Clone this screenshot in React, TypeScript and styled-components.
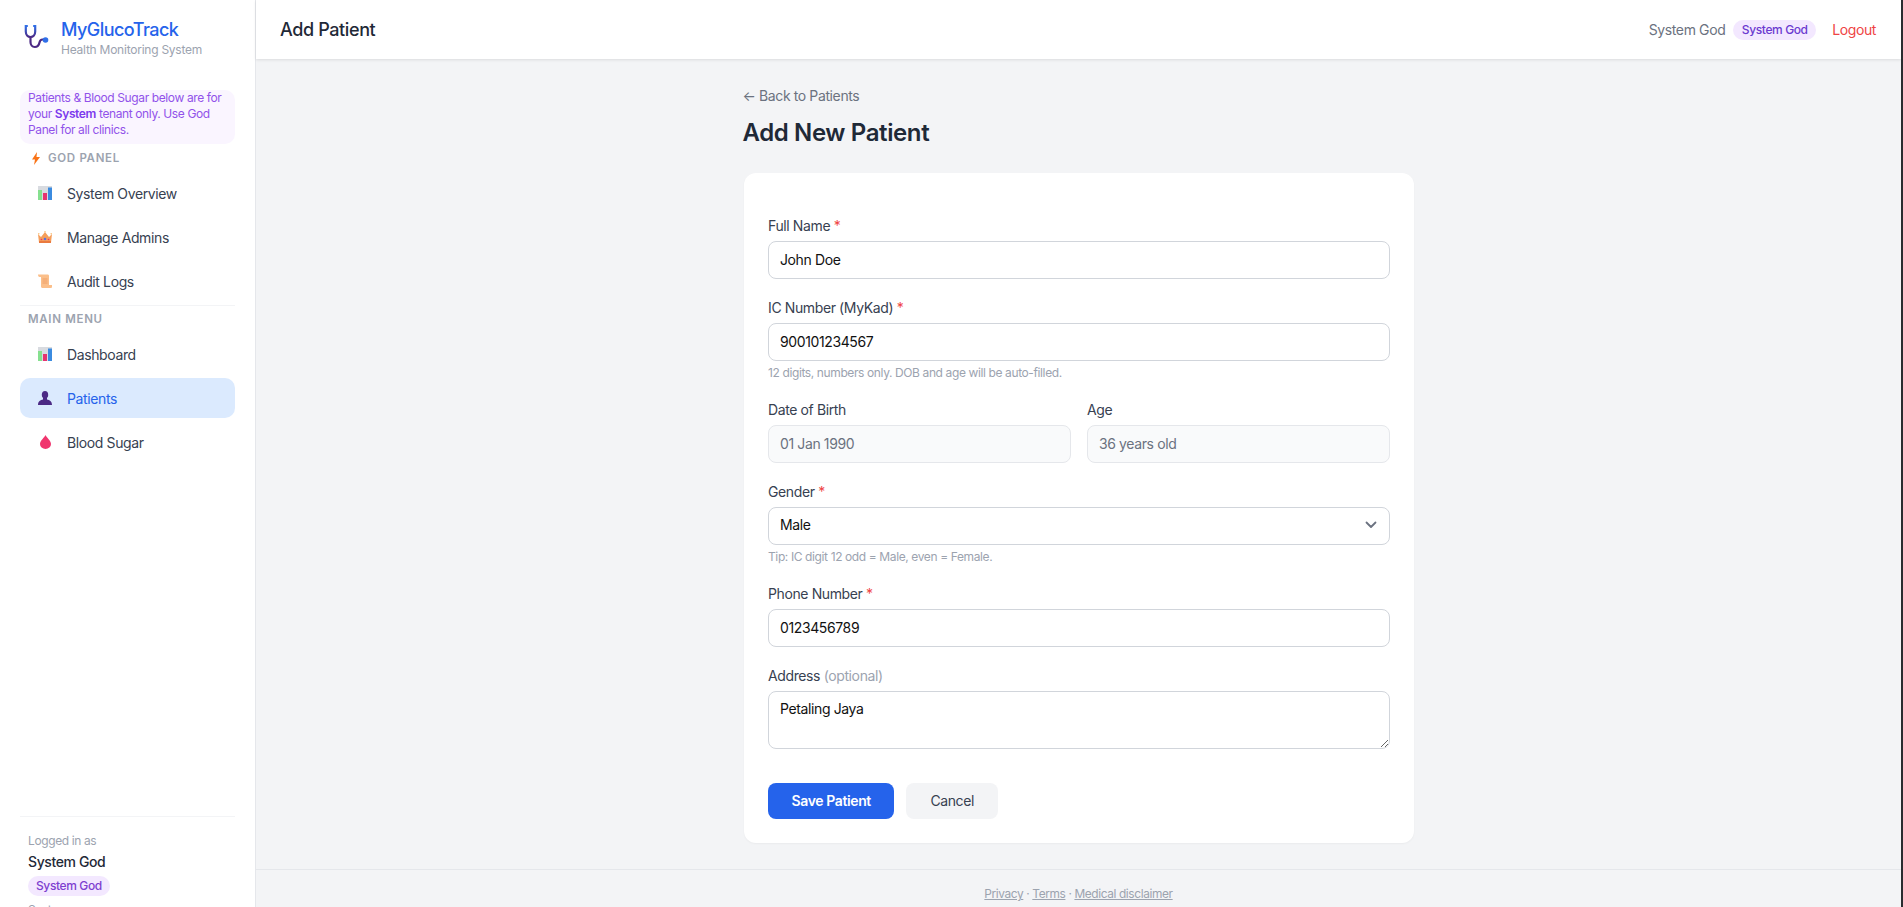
import styled, { createGlobalStyle } from 'styled-components';
import { ReactNode } from 'react';

const GlobalStyle = createGlobalStyle`
  * { box-sizing: border-box; }
  html, body { margin: 0; height: 100%; overflow: hidden; }
  body {
    font-family: Inter, "Open Sans", sans-serif;
    letter-spacing: -0.024em;
    background: #f3f4f6;
    color: #1f2937;
  }
  #root { height: 100%; }
`;

const Layout = styled.div`
  display: flex;
  height: 907px;
  overflow: hidden;
`;

const Sidebar = styled.aside`
  width: 256px;
  flex-shrink: 0;
  height: 907px;
  background: #fff;
  border-right: 1px solid #e5e7eb;
  padding: 0 20px;
  display: flex;
  flex-direction: column;
  overflow: hidden;
`;

const Brand = styled.div`
  display: flex;
  align-items: flex-start;
  gap: 12px;
  padding: 19px 0 0 4px;
  height: 90px;
`;

const BrandLogo = styled.span`
  display: inline-flex;
  margin-top: 5px;
`;

const BrandTitle = styled.div`
  font-size: 18px;
  line-height: 22px;
  font-weight: 500;
  letter-spacing: -0.03em;
  color: #2563eb;
`;

const BrandSub = styled.div`
  font-size: 12px;
  line-height: 16px;
  margin-top: 1px;
  letter-spacing: -0.02em;
  color: #9ca3af;
`;

const Notice = styled.div`
  background: #faf5ff;
  border-radius: 10px;
  padding: 0 8px;
  font-size: 12px;
  line-height: 16px;
  height: 54px;
  color: #9152ea;
  b { font-weight: 600; color: #7c3aed; }
`;

const SectionLabel = styled.div<{ $top: number }>`
  display: flex;
  align-items: center;
  gap: 8px;
  margin-top: ${p => p.$top}px;
  padding-left: 8px;
  height: 16px;
  font-size: 11.5px;
  font-weight: 600;
  letter-spacing: 0.06em;
  color: #9ca3af;
  text-transform: uppercase;
`;

const BoltSlot = styled.span`
  display: inline-flex;
  margin-left: 4px;
`;

const NavList = styled.nav`
  display: flex;
  flex-direction: column;
  gap: 4px;
  margin-top: 7px;
`;

const NavItem = styled.a<{ $active?: boolean }>`
  display: flex;
  align-items: center;
  gap: 15px;
  height: 40px;
  padding-left: 18px;
  border-radius: 10px;
  font-size: 14px;
  color: ${p => (p.$active ? '#2563eb' : '#374151')};
  background: ${p => (p.$active ? '#dbeafe' : 'transparent')};
`;

const NavDivider = styled.div`
  height: 1px;
  background: #f3f4f6;
  margin-top: 4px;
  flex-shrink: 0;
`;

const UserBox = styled.div`
  margin-top: auto;
  border-top: 1px solid #f3f4f6;
  padding: 16px 8px 0;
  height: 91px;
  flex-shrink: 0;
  display: flex;
  flex-direction: column;
  align-items: flex-start;
`;

const UserHint = styled.div`
  font-size: 12px;
  line-height: 16px;
  flex-shrink: 0;
  color: #9ca3af;
`;

const UserName = styled.div`
  font-size: 14px;
  line-height: 20px;
  margin-top: 3px;
  font-weight: 500;
  flex-shrink: 0;
  color: #1f2937;
`;

const Badge = styled.span`
  display: inline-block;
  background: #f3e8ff;
  color: #6b3ad0;
  border-radius: 999px;
  font-size: 12px;
  line-height: 20px;
  padding: 0 8.5px;
  font-weight: 500;
  flex-shrink: 0;
`;

const SideBadge = styled(Badge)`
  margin: 4px 0 6px;
  padding: 0 8px;
  color: #7e3fd0;
`;

const Main = styled.div`
  flex: 1;
  min-width: 0;
  display: flex;
  flex-direction: column;
  background: #f3f4f6;
`;

const ScrollEdge = styled.div`
  width: 2px;
  flex-shrink: 0;
  background: #2a2c30;
`;

const TopBar = styled.header`
  height: 59px;
  flex-shrink: 0;
  background: #fff;
  box-shadow: 0 1px 3px rgba(0, 0, 0, 0.1);
  display: flex;
  align-items: center;
  justify-content: space-between;
  padding: 0 25px 0 24px;
`;

const TopTitle = styled.div`
  font-size: 18px;
  font-weight: 500;
  color: #1f2937;
`;

const TopRight = styled.div`
  display: flex;
  align-items: center;
  gap: 8px;
  font-size: 14px;
  color: #6b7280;
`;

const Logout = styled.a`
  margin-left: 8px;
  color: #ef4444;
`;

const Content = styled.main`
  width: 670px;
  margin: 0 auto;
  padding-top: 28px;
  flex: 1;
`;

const BackLink = styled.a`
  display: block;
  margin-left: -1px;
  font-size: 14px;
  line-height: 18px;
  color: #6b7280;
`;

const Heading = styled.h1`
  margin: 12px 0 0 -1px;
  font-size: 24px;
  line-height: 32px;
  font-weight: 600;
  color: #1f2937;
`;

const Card = styled.form`
  margin-top: 24px;
  background: #fff;
  border-radius: 12px;
  box-shadow: 0 1px 2px rgba(0, 0, 0, 0.04);
  padding: 44px 23.5px 24px 24.5px;
  height: 670px;
`;

const Field = styled.div`
  margin-bottom: 20px;
`;

const Label = styled.label`
  display: block;
  font-size: 14px;
  line-height: 18px;
  margin-bottom: 6px;
  font-weight: 420;
  color: #374151;
  i { font-style: normal; color: #ef4444; }
  em { font-style: normal; font-weight: 400; color: #9ca3af; }
`;

const Input = styled.input`
  display: block;
  width: 100%;
  height: 38px;
  border: 1px solid #d1d5db;
  border-radius: 8px;
  padding: 0 11px 2px;
  font: inherit;
  letter-spacing: inherit;
  font-size: 14px;
  color: #111;
  background: #fff;
  outline: none;
  &:read-only { background: #f9fafb; border-color: #e5e7eb; color: #6b7280; }
`;

const SelectBox = styled.div`
  display: flex;
  align-items: center;
  justify-content: space-between;
  height: 38px;
  border: 1px solid #d1d5db;
  border-radius: 8px;
  padding: 0 8px 3px 11px;
  font-size: 14px;
  color: #111;
  background: #fff;
`;

const TextArea = styled.textarea`
  display: block;
  width: 100%;
  height: 58px;
  border: 1px solid #d1d5db;
  border-radius: 8px;
  padding: 8px 11px;
  font: inherit;
  letter-spacing: inherit;
  font-size: 14px;
  color: #111;
  outline: none;
`;

const Hint = styled.div`
  font-size: 12px;
  line-height: 16px;
  margin-top: 4px;
  color: #9ca3af;
`;

const TwoCols = styled.div`
  display: grid;
  grid-template-columns: 1fr 1fr;
  gap: 16px;
`;

const Actions = styled.div`
  display: flex;
  gap: 12px;
  margin-top: 34px;
`;

const Button = styled.button<{ $primary?: boolean }>`
  height: 36px;
  border: 0;
  border-radius: 8px;
  font: inherit;
  letter-spacing: inherit;
  font-size: 14px;
  font-weight: ${p => (p.$primary ? 600 : 400)};
  padding: 0 ${p => (p.$primary ? 23.5 : 24)}px 1px;
  color: ${p => (p.$primary ? '#fff' : '#374151')};
  background: ${p => (p.$primary ? '#2563eb' : '#f3f4f6')};
`;

const Footer = styled.footer`
  height: 38px;
  flex-shrink: 0;
  border-top: 1px solid #e5e7eb;
  display: flex;
  justify-content: center;
  align-items: center;
  padding-top: 10px;
  font-size: 11.9px;
  color: #9ca3af;
  a { text-decoration: underline; }
`;

function Stethoscope() {
  return (
    <svg width="25" height="25" viewBox="0 0 25 25" fill="none">
      <defs>
        <linearGradient id="steth" x1="0" y1="0" x2="0" y2="1">
          <stop offset="0" stopColor="#2f6fe8" />
          <stop offset="1" stopColor="#4c2a85" />
        </linearGradient>
      </defs>
      <path d="M3 2H1.800V7.500C1.800 10.800 3.800 13 6.500 13S11.200 10.800 11.200 7.500V2H10" stroke="url(#steth)" strokeWidth="2.200" strokeLinecap="round" />
      <path d="M6.500 13V18C6.500 21 8.300 23 10.800 23S15 21 15.500 18.500C15.900 16.500 16.800 15.500 18.500 15.500H20" stroke="#4c2a85" strokeWidth="2.200" strokeLinecap="round" />
      <circle cx="21.500" cy="16" r="2.800" fill="#2f6fe8" />
    </svg>
  );
}

function Bolt() {
  return (
    <svg width="8" height="13" viewBox="0 0 8 13"><path d="M5 0 0 7.500h3L2 13l6-8H4.500z" fill="#f97316" /></svg>
  );
}

function BarsIcon() {
  return (
    <svg width="14" height="14" viewBox="0 0 14 14">
      <rect width="14" height="14" fill="#d8dbe0" />
      <rect x="0" y="4" width="4" height="10" fill="#86e08f" />
      <rect x="5" y="7" width="4" height="7" fill="#e6336f" />
      <rect x="10" y="1.500" width="4" height="12.500" fill="#3b8be0" />
    </svg>
  );
}

function CrownIcon() {
  return (
    <svg width="14" height="14" viewBox="0 0 14 14">
      <path d="M0 4l3 3 4-5 4 5 3-3-1 8.500H1z" fill="#f59e5b" />
      <circle cx="0.800" cy="3.800" r="0.800" fill="#fbbf77" />
      <circle cx="7" cy="1.800" r="0.800" fill="#fbbf77" />
      <circle cx="13.200" cy="3.800" r="0.800" fill="#fbbf77" />
      <circle cx="7" cy="9" r="1.300" fill="#5b6ee0" />
      <circle cx="3.500" cy="9.500" r="0.800" fill="#e6336f" />
      <circle cx="10.500" cy="9.500" r="0.800" fill="#e6336f" />
      <rect x="1" y="11" width="12" height="2" fill="#ea7a3f" />
    </svg>
  );
}

function ScrollIcon() {
  return (
    <svg width="14" height="14" viewBox="0 0 14 14">
      <path d="M0 0.500h9.500c1 0 1.500.5 1.500 1.500v9h3v1.500c0 1-.5 1.500-1.500 1.500H5c-1 0-2-.5-2-1.500V3H1.500C.5 3 0 2 0 .5z" fill="#fbbf8a" />
      <path d="M4.500 5h5M4.500 7h5M4.500 9h5" stroke="#ee9a5f" strokeWidth="0.800" />
    </svg>
  );
}

function BustIcon() {
  return (
    <svg width="14" height="14" viewBox="0 0 14 14">
      <ellipse cx="7" cy="3.800" rx="3.200" ry="3.800" fill="#4c2a85" />
      <path d="M5 6h4v2.500c2.500.5 5 1.500 5 5.500H0c0-4 2.500-5 5-5.500z" fill="#4c2a85" />
    </svg>
  );
}

function DropIcon() {
  return (
    <svg width="11" height="14" viewBox="0 0 11 14">
      <path d="M5.500 0c1 2.500 5.500 5.500 5.500 9A5.500 5 0 0 1 0 9C0 5.500 4.500 2.500 5.500 0z" fill="#f0356e" />
    </svg>
  );
}

function Chevron() {
  return (
    <svg width="20" height="20" viewBox="0 0 20 20" fill="none">
      <path d="M5.500 7.500l4.500 4.500 4.500-4.500" stroke="#6b7280" strokeWidth="1.800" strokeLinecap="round" strokeLinejoin="round" />
    </svg>
  );
}

const IconSlot = styled.span`
  width: 14px;
  height: 14px;
  display: inline-flex;
  justify-content: center;
  flex-shrink: 0;
`;

function Item(props: { icon: ReactNode; active?: boolean; children: ReactNode }) {
  return (
    <NavItem $active={props.active}>
      <IconSlot>{props.icon}</IconSlot>
      {props.children}
    </NavItem>
  );
}

export default function App() {
  return (
    <>
      <GlobalStyle />
      <Layout>
        <Sidebar>
          <Brand>
            <BrandLogo><Stethoscope /></BrandLogo>
            <div>
              <BrandTitle>MyGlucoTrack</BrandTitle>
              <BrandSub>Health Monitoring System</BrandSub>
            </div>
          </Brand>
          <Notice>
            Patients &amp; Blood Sugar below are for your <b>System</b> tenant only. Use God Panel for all clinics.
          </Notice>
          <SectionLabel $top={6}><BoltSlot><Bolt /></BoltSlot> God Panel</SectionLabel>
          <NavList>
            <Item icon={<BarsIcon />}>System Overview</Item>
            <Item icon={<CrownIcon />}>Manage Admins</Item>
            <Item icon={<ScrollIcon />}>Audit Logs</Item>
          </NavList>
          <NavDivider />
          <SectionLabel $top={5}>Main Menu</SectionLabel>
          <NavList>
            <Item icon={<BarsIcon />}>Dashboard</Item>
            <Item icon={<BustIcon />} active>Patients</Item>
            <Item icon={<DropIcon />}>Blood Sugar</Item>
          </NavList>
          <UserBox>
            <UserHint>Logged in as</UserHint>
            <UserName>System God</UserName>
            <SideBadge>System God</SideBadge>
            <UserHint>System</UserHint>
          </UserBox>
        </Sidebar>
        <Main>
          <TopBar>
            <TopTitle>Add Patient</TopTitle>
            <TopRight>
              System God <Badge>System God</Badge>
              <Logout>Logout</Logout>
            </TopRight>
          </TopBar>
          <Content>
            <BackLink>← Back to Patients</BackLink>
            <Heading>Add New Patient</Heading>
            <Card>
              <Field>
                <Label>Full Name <i>*</i></Label>
                <Input defaultValue="John Doe" />
              </Field>
              <Field>
                <Label>IC Number (MyKad) <i>*</i></Label>
                <Input defaultValue="900101234567" />
                <Hint>12 digits, numbers only. DOB and age will be auto-filled.</Hint>
              </Field>
              <TwoCols>
                <Field>
                  <Label>Date of Birth</Label>
                  <Input readOnly defaultValue="01 Jan 1990" />
                </Field>
                <Field>
                  <Label>Age</Label>
                  <Input readOnly defaultValue="36 years old" />
                </Field>
              </TwoCols>
              <Field>
                <Label>Gender <i>*</i></Label>
                <SelectBox>Male <Chevron /></SelectBox>
                <Hint>Tip: IC digit 12 odd = Male, even = Female.</Hint>
              </Field>
              <Field>
                <Label>Phone Number <i>*</i></Label>
                <Input defaultValue="0123456789" />
              </Field>
              <Field>
                <Label>Address <em>(optional)</em></Label>
                <TextArea defaultValue="Petaling Jaya" />
              </Field>
              <Actions>
                <Button $primary type="button">Save Patient</Button>
                <Button type="button">Cancel</Button>
              </Actions>
            </Card>
          </Content>
          <Footer>
            <span><a>Privacy</a> · <a>Terms</a> · <a>Medical disclaimer</a></span>
          </Footer>
        </Main>
        <ScrollEdge />
      </Layout>
    </>
  );
}
